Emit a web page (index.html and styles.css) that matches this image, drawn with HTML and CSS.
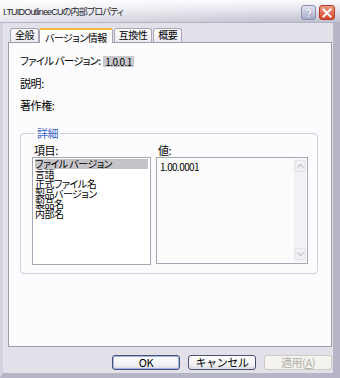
FILE: index.html
```html
<!DOCTYPE html>
<html lang="ja">
<head>
    <meta charset="UTF-8">
    <title>プロパティ</title>
    <link rel="stylesheet" href="styles.css">
</head>
<body>
    <div class="window">
        <div class="titlebar">
            <span class="title">I.TUIDOutlineeCUの内部プロパティ</span>
            <div class="caption-buttons">
                <span class="cap-btn help">?</span>
                <span class="cap-btn close">
                    <svg width="10" height="10" viewBox="0 0 10 10"><path d="M1.5 1.5 L8.5 8.5 M8.5 1.5 L1.5 8.5" stroke="#fff" stroke-width="2" stroke-linecap="square"/></svg>
                </span>
            </div>
        </div>

        <div class="frame">
            <div class="tabs">
                <div class="tab">全般</div>
                <div class="tab active">バージョン情報</div>
                <div class="tab">互換性</div>
                <div class="tab">概要</div>
            </div>

            <div class="panel">
                <div class="field">
                    <span class="label">ファイル バージョン:</span>
                    <span class="value">1.0.0.1</span>
                </div>
                <div class="field">説明:</div>
                <div class="field">著作権:</div>

                <fieldset class="group">
                    <legend>詳細</legend>
                    <div class="cols">
                        <div class="col items">
                            <div class="cap">項目:</div>
                            <div class="listbox">
                                <div class="item selected">ファイル バージョン</div>
                                <div class="item">言語</div>
                                <div class="item">正式ファイル名</div>
                                <div class="item">製品バージョン</div>
                                <div class="item">製品名</div>
                                <div class="item">内部名</div>
                            </div>
                        </div>
                        <div class="col values">
                            <div class="cap">値:</div>
                            <div class="valuebox">
                                <div class="valuetext">1.00.0001</div>
                                <div class="scrollbar">
                                    <span class="arrow">
                                        <svg width="7" height="4" viewBox="0 0 7 4"><path d="M0.5 3.5 L3.5 0.5 L6.5 3.5" fill="none" stroke="#c4c3cc" stroke-width="1.2"/></svg>
                                    </span>
                                    <span class="arrow">
                                        <svg width="7" height="4" viewBox="0 0 7 4"><path d="M0.5 0.5 L3.5 3.5 L6.5 0.5" fill="none" stroke="#c4c3cc" stroke-width="1.2"/></svg>
                                    </span>
                                </div>
                            </div>
                        </div>
                    </div>
                </fieldset>
            </div>

            <div class="buttons">
                <button class="btn default">OK</button>
                <button class="btn">キャンセル</button>
                <button class="btn" disabled>適用(<u>A</u>)</button>
            </div>
        </div>
    </div>
</body>
</html>
```

FILE: styles.css
```css
body {
    margin: 0;
    font-family: "Noto Sans CJK JP", "Liberation Sans", sans-serif;
    font-size: 11px;
    font-feature-settings: "palt";
    letter-spacing: -0.4px;
    color: #000;
    background: #e2e0e8;
}
.window {
    width: 340px;
    height: 378px;
    display: flex;
    flex-direction: column;
    box-sizing: border-box;
}

/* タイトルバー */
.titlebar {
    height: 23px;
    flex-shrink: 0;
    display: flex;
    align-items: center;
    justify-content: space-between;
    padding: 0 5px 0 3px;
    background:
        linear-gradient(to right, rgba(255, 255, 255, 0.6), rgba(255, 255, 255, 0) 80%),
        linear-gradient(to bottom, #fcfcfe, #e4e4ec 45%, #c2c1d0);
    border-bottom: 1px solid #b4b3c4;
    box-sizing: border-box;
}
.title {
    font-family: "Liberation Sans", "Noto Sans CJK JP", sans-serif;
    font-size: 9px;
    letter-spacing: -0.8px;
    color: #1c1c28;
    white-space: nowrap;
}
.caption-buttons {
    display: flex;
    gap: 3px;
    margin-top: 3px;
}
.cap-btn {
    height: 15px;
    border-radius: 3px;
    display: flex;
    align-items: center;
    justify-content: center;
    box-sizing: border-box;
}
.help {
    width: 15px;
    background: linear-gradient(to bottom, #e2e4f2, #a6aac8);
    border: 1px solid #8a8eac;
    color: #fff;
    font-family: "Liberation Sans", sans-serif;
    font-weight: bold;
    font-size: 11px;
    text-shadow: 0 0 1px #5a5e80;
}
.close {
    width: 16px;
    background: linear-gradient(to bottom, #f09a80, #d8452a);
    border: 1px solid #b03a26;
}

/* 枠 */
.frame {
    flex: 1;
    display: flex;
    flex-direction: column;
    border-left: 3px solid #d4d2de;
    border-right: 7px solid #b6b5c6;
    border-bottom: 5px solid #b6b5c6;
    padding: 0 1px 0 5px;
}

/* タブ */
.tabs {
    display: flex;
    align-items: flex-end;
    height: 19px;
    padding-left: 2px;
    flex-shrink: 0;
}
.tab {
    height: 13px;
    line-height: 12px;
    padding: 0 4px;
    margin-right: 1px;
    font-size: 10px;
    letter-spacing: -0.5px;
    background: linear-gradient(to bottom, #ffffff, #ecebf1);
    border: 1px solid #a7a6b4;
    border-bottom: none;
    border-radius: 3px 3px 0 0;
}
.tab.active {
    height: 15px;
    line-height: 15px;
    background: #fcfcfe;
    border-top: 2px solid #f3b73b;
    margin: 0 1px 0 -1px;
    position: relative;
    top: 1px;
    box-sizing: border-box;
    padding: 0 5px;
}

.panel {
    height: 305px;
    flex-shrink: 0;
    box-sizing: border-box;
    background: #fcfcfe;
    border: 1px solid #9c9baa;
    padding: 12px 13px 0 11px;
}
.field {
    height: 22px;
    line-height: 12px;
    display: flex;
    white-space: nowrap;
}
.field .label {
    flex: none;
    margin-right: 3px;
    font-size: 10.5px;
    letter-spacing: -0.8px;
}
.field .value {
    background: #c8c8cc;
    padding: 0 2px;
    height: 11px;
    line-height: 11px;
    margin-top: 1px;
    font-size: 10px;
    letter-spacing: -0.6px;
}

/* 詳細グループ */
.group {
    margin: 6px 0 0 0;
    padding: 5px 9px 8px 11px;
    border: 1px solid #d0cfd8;
    border-radius: 4px;
    min-width: 0;
}
.group legend {
    color: #3c64c8;
    padding: 0 2px;
    margin-left: 3px;
    line-height: 12px;
}
.cols {
    display: flex;
    gap: 5px;
}
.col.items {
    width: 119px;
}
.col.values {
    flex: 1;
}
.cap {
    line-height: 12px;
    height: 13px;
    padding-left: 2px;
}
.listbox {
    height: 108px;
    box-sizing: border-box;
    border: 1px solid #a5a7b5;
    background: #fff;
    padding: 1px 2px;
}
.item {
    height: 10px;
    line-height: 10px;
    font-size: 10px;
    letter-spacing: -0.5px;
    white-space: nowrap;
}
.item.selected {
    background: #c4c4c8;
}
.valuebox {
    height: 107px;
    box-sizing: border-box;
    border: 1px solid #a5a7b5;
    background: #fbfbfc;
    display: flex;
    padding: 1px;
}
.valuetext {
    flex: 1;
    padding: 2px 2px;
    line-height: 11px;
    font-size: 10px;
    letter-spacing: -0.6px;
}
.scrollbar {
    width: 12px;
    background: #f2f1f6;
    display: flex;
    flex-direction: column;
    justify-content: space-between;
    padding: 1px 0 2px;
}
.arrow {
    height: 12px;
    border: 1px solid #e4e3ea;
    border-radius: 2px;
    background: #f0f0f4;
    display: flex;
    align-items: center;
    justify-content: center;
    box-sizing: border-box;
}

/* ボタン */
.buttons {
    display: flex;
    justify-content: flex-end;
    gap: 8px;
    margin-top: 8px;
}
.btn {
    width: 68px;
    height: 15px;
    padding: 0;
    font-family: inherit;
    font-size: 11px;
    letter-spacing: inherit;
    line-height: 13px;
    color: #000;
    background: linear-gradient(to bottom, #ffffff, #f0f0f4 70%, #d8d8e2);
    border: 1px solid #4b5074;
    border-radius: 3px;
}
.btn.default {
    box-shadow: inset 0 0 0 1px #9ab6e8;
}
.btn:disabled {
    color: #b1afa6;
    background: #f4f3ee;
    border-color: #cbc9c0;
}
```
